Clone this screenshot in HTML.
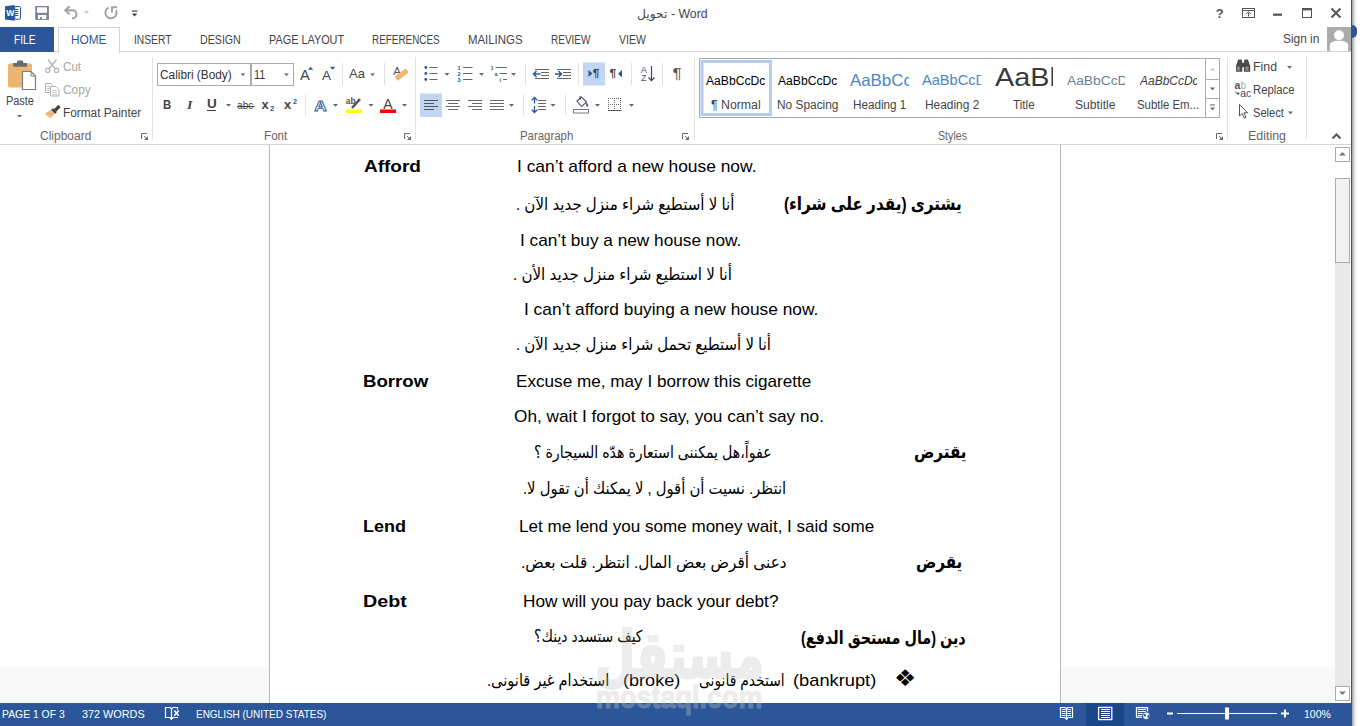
<!DOCTYPE html>
<html lang="en"><head><meta charset="utf-8"><title>تحويل - Word</title>
<style>
html,body{margin:0;padding:0;width:1360px;height:726px;overflow:hidden;background:#fff}
body{position:relative;font-family:"Liberation Sans","DejaVu Sans",sans-serif}
.t{position:absolute;white-space:pre;transform-origin:0 0;display:block;margin:0;padding:0}
.abs{position:absolute}
#win{position:absolute;left:0;top:0;width:1351px;height:726px;background:#fff;overflow:hidden}
svg{position:absolute;left:0;top:0;overflow:visible}
</style></head><body>
<div id="win">
  <!-- tabs -->
  <div class="abs" style="left:0;top:27px;width:54px;height:25px;background:#2b579a"></div>
  <div class="abs" style="left:54px;top:51px;width:1297px;height:1px;background:#d4d4d4"></div>
  <div class="abs" style="left:58px;top:27px;width:60px;height:25px;background:#fff;border:1px solid #d4d4d4;border-bottom:none"></div>
  <!-- ribbon bottom -->
  <div class="abs" style="left:0;top:144px;width:1351px;height:1px;background:#d4d4d4"></div>
  <!-- document area -->
  <div class="abs" style="left:0;top:145px;width:1351px;height:558px;background:#fdfdfd"></div>
  <div class="abs" style="left:269px;top:145px;width:790px;height:558px;background:#fff;border-left:1px solid #b9b9b9;border-right:1px solid #b9b9b9"></div>
  <div class="abs" style="left:0;top:667px;width:269px;height:36px;background:#f8f8f8"></div>
  <div class="abs" style="left:1061px;top:667px;width:274px;height:36px;background:#f8f8f8"></div>
  <!-- scrollbar -->
  <div class="abs" style="left:1335px;top:145px;width:16px;height:558px;background:#fff"></div>
  <div class="abs" style="left:1335px;top:263px;width:15px;height:423px;background:#e9e9e9"></div>
  <div class="abs" style="left:1335px;top:147px;width:13px;height:13px;background:#fff;border:1px solid #ababab"></div>
  <div class="abs" style="left:1335px;top:178px;width:13px;height:83px;background:#f1f1f1;border:1px solid #ababab"></div>
  <div class="abs" style="left:1335px;top:686px;width:13px;height:13px;background:#fff;border:1px solid #ababab"></div>
  <!-- status bar -->
  <div class="abs" style="left:0;top:703px;width:1351px;height:23px;background:#2b579a"></div>
  <svg width="1351" height="726" viewBox="0 0 1351 726">
  <path d="M1339,155.500l3.500,-3.500l3.500,3.500z" fill="#777"/>
  <path d="M1339,691.500l3.500,3.500l3.500,-3.500z" fill="#777"/>
<path d="M5,6.300L14.800,5V20.700L5,19.500z" fill="#2b579a"/>
<rect x="14.800" y="6.500" width="5.700" height="12.700" rx="1" fill="#fff" stroke="#2b579a" stroke-width="1"/>
<rect x="14.8" y="9" width="3.5" height="1" fill="#2b579a"/>
<rect x="14.8" y="11" width="3.5" height="1" fill="#2b579a"/>
<rect x="14.8" y="13" width="3.5" height="1" fill="#2b579a"/>
<rect x="14.8" y="15" width="3.5" height="1" fill="#2b579a"/>
<text x="6.200" y="16.300" font-family="Liberation Sans,sans-serif" font-weight="bold" font-size="8.500" fill="#fff">W</text>
<rect x="35.200" y="6" width="13.700" height="13.900" fill="#79829a"/>
<rect x="37" y="7.300" width="10" height="5.500" fill="#fff"/>
<rect x="38" y="15" width="8.300" height="4" fill="#fff"/>
<rect x="40" y="17" width="1.900" height="2" fill="#79829a"/>
<path d="M69.6,6.2L65.3,10.3L69.6,14.2M65.5,10.3h7a4,4 0 0 1 0,8h-.5" fill="none" stroke="#a3a3a3" stroke-width="2"/>
<path d="M84.2,11h4.8l-2.4,2.8z" fill="#c4c4c4"/>
<path d="M108.6,7.6A5.6,5.6 0 1 0 116,10.2" fill="none" stroke="#a3a3a3" stroke-width="2"/>
<path d="M112,12.3V7.3H117" fill="none" stroke="#a3a3a3" stroke-width="2"/>
<rect x="132" y="10.5" width="5.5" height="1.2" fill="#444"/>
<path d="M131.8,13.6h5.6l-2.8,3z" fill="#444"/>
<text x="1215.800" y="17.600" font-family="Liberation Sans,sans-serif" font-weight="bold" font-size="13" fill="#555">?</text>
<rect x="1242.5" y="8.5" width="12" height="9" fill="none" stroke="#555" stroke-width="1"/>
<rect x="1242" y="10" width="13" height="1" fill="#555"/>
<path d="M1248.5,16.5v-4M1246,14.2l2.5,-2.5l2.5,2.5" fill="none" stroke="#555" stroke-width="1"/>
<rect x="1273" y="13.6" width="9" height="2.2" fill="#555"/>
<rect x="1302.5" y="8.5" width="9" height="9" fill="none" stroke="#555" stroke-width="1"/>
<rect x="1302" y="8" width="10" height="2.4" fill="#555"/>
<path d="M1331.5,8.5l9,9M1340.5,8.5l-9,9" fill="none" stroke="#555" stroke-width="2"/>
<rect x="1327" y="27" width="24" height="24" fill="#ababab"/>
<circle cx="1339" cy="35.300" r="5" fill="#fff"/>
<path d="M1329.800,51v-5.500c0,-3.200 3.400,-4.800 9.200,-4.800s9.200,1.600 9.200,4.800v5.500z" fill="#fff"/>
<rect x="8" y="63.400" width="24" height="24.200" rx="1.500" fill="#ebb672"/>
<rect x="13.200" y="63" width="13.800" height="3.700" fill="#6a6a6a"/>
<rect x="17.100" y="60.400" width="6.100" height="3.200" rx="1" fill="#6a6a6a"/>
<path d="M22.500,71.500h8.500l4.500,4.500v13.500h-13z" fill="#fff" stroke="#7d7d7d" stroke-width="1.200"/>
<path d="M31,71.500v4.500h4.500" fill="none" stroke="#7d7d7d" stroke-width="1"/>
<path d="M17,115h5l-2.5,2.6z" fill="#666"/>
<path d="M48,59.5l7.5,9.500M56.500,59.500l-7.500,9.500" fill="none" stroke="#b3b3b3" stroke-width="1.3"/>
<circle cx="47.800" cy="70.300" r="2.200" fill="none" stroke="#b3b3b3" stroke-width="1.2"/>
<circle cx="56.500" cy="70.300" r="2.200" fill="none" stroke="#b3b3b3" stroke-width="1.2"/>
<path d="M45.500,83.500h5l2,2v7h-7z" fill="#fff" stroke="#b3b3b3" stroke-width="1"/>
<path d="M50.500,86.500h5.500l3,3v6.500h-8.500z" fill="#fff" stroke="#b3b3b3" stroke-width="1"/>
<rect x="52" y="90" width="5" height="1" fill="#c4c4c4"/>
<rect x="52" y="92" width="5" height="1" fill="#c4c4c4"/>
<rect x="52" y="94" width="5" height="1" fill="#c4c4c4"/>
<rect x="47" y="86" width="3" height="1" fill="#c4c4c4"/>
<rect x="47" y="88" width="3" height="1" fill="#c4c4c4"/>
<rect x="47" y="90" width="3" height="1" fill="#c4c4c4"/>
<path d="M55,110.500l4.500,-4.500" stroke="#444" stroke-width="3.2" fill="none"/>
<path d="M52,109l4,4" stroke="#444" stroke-width="2.500" fill="none"/>
<path d="M50.500,109.800l-5.500,4.200l5.500,4.200l4.500,-4.800z" fill="#ecb777"/>
<path d="M141.5,139V133.5H147" fill="none" stroke="#6a6a6a" stroke-width="1"/><path d="M144,140H148V136z" fill="#6a6a6a"/><path d="M144,136L146.5,138.5" fill="none" stroke="#6a6a6a" stroke-width="1"/>
<rect x="152" y="57" width="1" height="83" fill="#e1e1e1"/>
<rect x="157.500" y="63.500" width="93" height="22" fill="#fff" stroke="#ababab" stroke-width="1"/>
<rect x="251.500" y="63.500" width="42" height="22" fill="#fff" stroke="#ababab" stroke-width="1"/>
<path d="M240.5,73.5h5l-2.5,2.6z" fill="#666"/>
<path d="M284,73.5h5l-2.5,2.6z" fill="#666"/>
<path d="M308,69.700l2.600,-2.900l2.600,2.900z" fill="#2b579a"/>
<path d="M330,66.800l2.600,2.900l2.600,-2.900z" fill="#2b579a"/>
<rect x="342" y="63" width="1" height="22" fill="#e1e1e1"/>
<path d="M370,73.5h5l-2.5,2.6z" fill="#666"/>
<rect x="384" y="63" width="1" height="22" fill="#e1e1e1"/>
<text x="393.300" y="75" font-family="Liberation Sans,sans-serif" font-size="11.500" fill="#555">A</text>
<rect x="-7" y="-2.600" width="14" height="5.200" rx="1.200" transform="translate(401.600,74.600) rotate(-38)" fill="#ecb777"/>
<rect x="207" y="110" width="9" height="1" fill="#444"/>
<path d="M226,104h5l-2.5,2.8z" fill="#666"/>
<rect x="237.5" y="106" width="17.0" height="1" fill="#444"/>
<rect x="305" y="94.5" width="1" height="21.0" fill="#e1e1e1"/>
<text x="0" y="0" transform="translate(314.300,110.500) scale(1.120,1)" font-family="Liberation Sans,sans-serif" font-size="15.500" font-weight="bold" fill="#fff" stroke="#2b579a" stroke-width=".9">A</text>
<path d="M333,104h5l-2.5,2.8z" fill="#666"/>
<text x="345.800" y="104" font-family="Liberation Sans,sans-serif" font-size="8.500" font-weight="bold" fill="#555">ab</text>
<path d="M352,108l8,-9" stroke="#555" stroke-width="2.600" fill="none"/>
<rect x="346" y="109.500" width="16" height="3.500" fill="#ffff00"/>
<path d="M368.5,104h5l-2.5,2.8z" fill="#666"/>
<text x="383.300" y="109" font-family="Liberation Sans,sans-serif" font-size="14" fill="#444">A</text>
<rect x="380" y="109.500" width="16" height="3.500" fill="#ff0000"/>
<path d="M402,104h5l-2.5,2.8z" fill="#666"/>
<path d="M404.5,139V133.5H410" fill="none" stroke="#6a6a6a" stroke-width="1"/><path d="M407,140H411V136z" fill="#6a6a6a"/><path d="M407,136L409.5,138.5" fill="none" stroke="#6a6a6a" stroke-width="1"/>
<rect x="415" y="57" width="1" height="83" fill="#e1e1e1"/>
<circle cx="425.800" cy="67.5" r="1.400" fill="#2b579a"/>
<rect x="429.5" y="67.0" width="8.0" height="1" fill="#666"/>
<circle cx="425.800" cy="73.5" r="1.400" fill="#2b579a"/>
<rect x="429.5" y="73.0" width="8.0" height="1" fill="#666"/>
<circle cx="425.800" cy="79.5" r="1.400" fill="#2b579a"/>
<rect x="429.5" y="79.0" width="8.0" height="1" fill="#666"/>
<path d="M444.5,73h5l-2.5,2.8z" fill="#666"/>
<text x="457.600" y="69.5" font-family="Liberation Sans,sans-serif" font-size="5.500" font-weight="bold" fill="#2b579a">1</text>
<rect x="463" y="67.0" width="9.5" height="1" fill="#666"/>
<text x="457.600" y="75.5" font-family="Liberation Sans,sans-serif" font-size="5.500" font-weight="bold" fill="#2b579a">2</text>
<rect x="463" y="73.0" width="9.5" height="1" fill="#666"/>
<text x="457.600" y="81.5" font-family="Liberation Sans,sans-serif" font-size="5.500" font-weight="bold" fill="#2b579a">3</text>
<rect x="463" y="79.0" width="9.5" height="1" fill="#666"/>
<path d="M479,73h5l-2.5,2.8z" fill="#666"/>
<text x="490.500" y="69.500" font-family="Liberation Sans,sans-serif" font-size="5.500" font-weight="bold" fill="#2b579a">1</text>
<text x="494.500" y="75.500" font-family="Liberation Sans,sans-serif" font-size="5.500" font-weight="bold" fill="#2b579a">a</text>
<text x="499.500" y="81.500" font-family="Liberation Sans,sans-serif" font-size="5.500" font-weight="bold" fill="#2b579a">i</text>
<rect x="495.5" y="67" width="11.5" height="1" fill="#666"/>
<rect x="499.5" y="73" width="7.5" height="1" fill="#666"/>
<rect x="503" y="79" width="4" height="1" fill="#666"/>
<path d="M511,73h5l-2.5,2.8z" fill="#666"/>
<rect x="525" y="63" width="1" height="22" fill="#e1e1e1"/>
<rect x="535" y="69" width="14" height="1" fill="#666"/>
<rect x="541" y="72" width="8" height="1" fill="#666"/>
<rect x="541" y="75" width="8" height="1" fill="#666"/>
<rect x="535" y="78" width="14" height="1" fill="#666"/>
<rect x="557" y="69" width="14" height="1" fill="#666"/>
<rect x="563" y="72" width="8" height="1" fill="#666"/>
<rect x="563" y="75" width="8" height="1" fill="#666"/>
<rect x="557" y="78" width="14" height="1" fill="#666"/>
<path d="M533.500,74h7M536.500,71l-3,3l3,3" fill="none" stroke="#2b579a" stroke-width="1.500"/>
<path d="M555,74h6.500M558.500,71l3,3l-3,3" fill="none" stroke="#2b579a" stroke-width="1.500"/>
<rect x="578" y="63" width="1" height="22" fill="#e1e1e1"/>
<rect x="583" y="62.500" width="22" height="23" fill="#c2d5f2"/>
<path d="M588.500,70l4,3.500l-4,3.500z" fill="#2b579a"/>
<text x="0" y="0" transform="translate(592.800,76.500) scale(1.200,1)" font-family="Liberation Sans,sans-serif" font-size="10" font-weight="bold" fill="#444">¶</text>
<text x="0" y="0" transform="translate(609.600,76.500) scale(1.200,1)" font-family="Liberation Sans,sans-serif" font-size="10" font-weight="bold" fill="#444">¶</text>
<path d="M622,70l-4,3.700l4,3.700z" fill="#2b579a"/>
<rect x="631" y="63" width="1" height="22" fill="#e1e1e1"/>
<text x="640.800" y="72.800" font-family="Liberation Sans,sans-serif" font-size="9" fill="#2b579a">A</text>
<text x="641" y="81" font-family="Liberation Sans,sans-serif" font-size="9" fill="#555">Z</text>
<path d="M651.500,66v14.500M648.500,77.500l3,3.200l3,-3.200" fill="none" stroke="#444" stroke-width="1.200"/>
<rect x="662" y="63" width="1" height="22" fill="#e1e1e1"/>
<text x="0" y="0" transform="translate(672.600,78.300) scale(1.180,1)" font-family="Liberation Sans,sans-serif" font-size="14.500" fill="#555">¶</text>
<rect x="420" y="93.500" width="22" height="23.500" fill="#c2d5f2"/>
<rect x="424" y="100" width="14" height="1" fill="#555"/>
<rect x="446" y="100" width="14" height="1" fill="#666"/>
<rect x="468" y="100" width="14" height="1" fill="#666"/>
<rect x="490" y="100" width="14" height="1" fill="#666"/>
<rect x="424" y="103" width="10" height="1" fill="#555"/>
<rect x="448" y="103" width="10" height="1" fill="#666"/>
<rect x="472" y="103" width="10" height="1" fill="#666"/>
<rect x="490" y="103" width="14" height="1" fill="#666"/>
<rect x="424" y="106" width="14" height="1" fill="#555"/>
<rect x="446" y="106" width="14" height="1" fill="#666"/>
<rect x="468" y="106" width="14" height="1" fill="#666"/>
<rect x="490" y="106" width="14" height="1" fill="#666"/>
<rect x="424" y="109" width="10" height="1" fill="#555"/>
<rect x="448" y="109" width="10" height="1" fill="#666"/>
<rect x="472" y="109" width="10" height="1" fill="#666"/>
<rect x="490" y="109" width="14" height="1" fill="#666"/>
<path d="M509,104h5l-2.5,2.8z" fill="#666"/>
<rect x="523" y="94.5" width="1" height="21.0" fill="#e1e1e1"/>
<path d="M534.500,97.500v6M534.500,106v6.500M531.700,100.300l2.800,-2.800l2.800,2.800M531.700,109.700l2.800,2.800l2.800,-2.800" fill="none" stroke="#2b579a" stroke-width="1.300"/>
<rect x="538" y="100" width="8" height="1" fill="#666"/>
<rect x="538" y="103" width="8" height="1" fill="#666"/>
<rect x="538" y="106" width="8" height="1" fill="#666"/>
<rect x="538" y="109" width="8" height="1" fill="#666"/>
<path d="M550.5,104h5l-2.5,2.8z" fill="#666"/>
<rect x="565" y="94.5" width="1" height="21.0" fill="#e1e1e1"/>
<path d="M577,101l4.500,-4l5,5l-4.800,4.500z" fill="#fff" stroke="#555" stroke-width="1.100"/>
<path d="M586.500,102.500c1.500,1.500 2.200,3 1.200,4c-1.200,.8 -2,-.8 -1.200,-4z" fill="#2b579a"/>
<path d="M580,96v4" stroke="#555" stroke-width="1.100"/>
<rect x="573.500" y="109.500" width="15" height="3.500" fill="#fff" stroke="#777" stroke-width="1"/>
<path d="M595,104h5l-2.5,2.8z" fill="#666"/>
<path d="M608,98.500h13M608,104.500h13M608.500,98v12M614.500,98v12M620.500,98v12" fill="none" stroke="#666" stroke-width="1" stroke-dasharray="1,1" shape-rendering="crispEdges"/>
<rect x="608" y="110" width="13.5" height="1" fill="#555"/>
<path d="M629,104h5l-2.5,2.8z" fill="#666"/>
<path d="M682.5,139V133.5H688" fill="none" stroke="#6a6a6a" stroke-width="1"/><path d="M685,140H689V136z" fill="#6a6a6a"/><path d="M685,136L687.5,138.5" fill="none" stroke="#6a6a6a" stroke-width="1"/>
<rect x="694" y="57" width="1" height="83" fill="#e1e1e1"/>
<rect x="699.500" y="58.500" width="520" height="59" fill="#fff" stroke="#ababab" stroke-width="1"/>
<rect x="702" y="61.500" width="68.500" height="53" fill="#fff" stroke="#b4ccee" stroke-width="3"/>
<path d="M1205.500,58.500v59M1205.500,79.500h14M1205.500,98.500h14" fill="none" stroke="#ababab" stroke-width="1"/>
<path d="M1210,70.500l2.500,-2.800l2.500,2.800z" fill="#c6c6c6"/>
<path d="M1210,87.5h5l-2.5,2.8z" fill="#666"/>
<rect x="1210" y="104.5" width="5" height="1" fill="#666"/>
<path d="M1210,107.5h5l-2.5,2.8z" fill="#666"/>
<path d="M1216.5,139V133.5H1222" fill="none" stroke="#6a6a6a" stroke-width="1"/><path d="M1219,140H1223V136z" fill="#6a6a6a"/><path d="M1219,136L1221.5,138.5" fill="none" stroke="#6a6a6a" stroke-width="1"/>
<rect x="1227" y="57" width="1" height="83" fill="#e1e1e1"/>
<path d="M1238.300,59.500h3.400l.8,3.500h1.200l.8,-3.500h3.400l2.300,6.500v5.800h-6.300v-4.600h-1.600v4.600h-6.300v-5.800z" fill="#4a4a4a"/>
<rect x="1236.700" y="66.500" width="3.200" height="4.200" fill="#8a8a8a"/><rect x="1245.300" y="66.500" width="3.200" height="4.200" fill="#8a8a8a"/>
<path d="M1287,66h5l-2.5,2.8z" fill="#666"/>
<text x="1234.600" y="89.300" font-family="Liberation Sans,sans-serif" font-size="10.500" font-weight="bold" fill="#555">a<tspan fill="#a9a9a9" font-weight="normal">b</tspan></text>
<text x="1240.200" y="96.600" font-family="Liberation Sans,sans-serif" font-size="10.500" fill="#444">a<tspan fill="#2b579a">c</tspan></text>
<path d="M1235.300,91.500l1.500,2h2.200M1237.600,92l1.500,1.500l-1.500,1.500" fill="none" stroke="#2b579a" stroke-width="1"/>
<path d="M1239.500,104.500v11.500l2.600,-2.500l2.200,4.600l1.800,-.8l-2.200,-4.500h3.800z" fill="#fff" stroke="#555" stroke-width="1"/>
<path d="M1288,111.5h5l-2.5,2.8z" fill="#666"/>
<rect x="1306" y="57" width="1" height="83" fill="#e1e1e1"/>
<path d="M1332.500,138.500l4,-4l4,4" fill="none" stroke="#555" stroke-width="2"/>
<path d="M171.500,708.700L170,707.500H165.500V717.500H170L171.500,719.300L173,717.500H178M171.500,708.700L173,707.500H177.500V709.500M171.500,708.700V719" fill="none" stroke="#fff" stroke-width="1.200"/>
<path d="M174.300,710.600l4.400,5.200M178.700,710.600l-4.400,5.200" stroke="#fff" stroke-width="1.600" fill="none"/>
<path d="M1066.500,708.500L1065,707.500H1060.500V717.500H1065L1066.500,719.300L1068,717.500H1072.500V707.500H1068z" fill="none" stroke="#fff" stroke-width="1.200"/>
<path d="M1066.500,708.500V719.500" stroke="#fff" stroke-width="1.200"/>
<rect x="1062" y="709" width="3.5" height="1" fill="#fff"/>
<rect x="1067.5" y="709" width="3.5" height="1" fill="#fff"/>
<rect x="1062" y="711" width="3.5" height="1" fill="#fff"/>
<rect x="1067.5" y="711" width="3.5" height="1" fill="#fff"/>
<rect x="1062" y="713" width="3.5" height="1" fill="#fff"/>
<rect x="1067.5" y="713" width="3.5" height="1" fill="#fff"/>
<rect x="1062" y="715" width="3.5" height="1" fill="#fff"/>
<rect x="1067.5" y="715" width="3.5" height="1" fill="#fff"/>
<rect x="1086" y="703" width="38" height="23" fill="#19478a"/>
<rect x="1098.600" y="707.400" width="13.200" height="12.200" fill="none" stroke="#fff" stroke-width="1.300"/>
<rect x="1101" y="709" width="9" height="1" fill="#fff"/>
<rect x="1101" y="711" width="9" height="1" fill="#fff"/>
<rect x="1101" y="713" width="9" height="1" fill="#fff"/>
<rect x="1101" y="715" width="9" height="1" fill="#fff"/>
<rect x="1101" y="717" width="9" height="1" fill="#fff"/>
<path d="M1136.500,717.200V707.600H1147.500V711.500" fill="none" stroke="#fff" stroke-width="1.300"/>
<rect x="1136" y="716.6" width="6" height="1.2" fill="#fff"/>
<rect x="1138" y="709" width="8" height="1" fill="#fff"/>
<rect x="1138" y="711" width="8" height="1" fill="#fff"/>
<rect x="1138" y="713" width="5" height="1" fill="#fff"/>
<rect x="1138" y="715" width="4" height="1" fill="#fff"/>
<circle cx="1146.300" cy="715.800" r="3.700" fill="#fff" stroke="#2b579a" stroke-width=".8"/>
<path d="M1144,713.500l2,1.200l-.5,2l-1.800,-.6zM1147.200,716.200l1.800,-1.600l.6,1.800l-1.600,1.800z" fill="#2b579a"/>
<rect x="1167" y="712.5" width="6" height="2" fill="#fff"/>
<rect x="1177" y="713" width="100" height="1" fill="#fff"/>
<rect x="1225" y="707.500" width="4" height="12" fill="#fff"/>
<rect x="1281" y="712.5" width="8" height="2" fill="#fff"/>
<rect x="1284" y="709.500" width="2" height="8" fill="#fff"/>
  </svg>
<span class="t" style="left:637.0px;top:6.01px;font-size:12px;line-height:16px;color:#444;transform:scaleX(1.0256);">تحويل - Word</span>
<span class="t" style="left:13.7px;top:32.01px;font-size:12px;line-height:16px;color:#fff;transform:scaleX(0.8485);">FILE</span>
<span class="t" style="left:70.9px;top:32.01px;font-size:12px;line-height:16px;color:#2b579a;transform:scaleX(0.9862);">HOME</span>
<span class="t" style="left:133.8px;top:32.01px;font-size:12px;line-height:16px;color:#444;transform:scaleX(0.8560);">INSERT</span>
<span class="t" style="left:199.7px;top:32.01px;font-size:12px;line-height:16px;color:#444;transform:scaleX(0.8866);">DESIGN</span>
<span class="t" style="left:268.7px;top:32.01px;font-size:12px;line-height:16px;color:#444;transform:scaleX(0.9057);">PAGE LAYOUT</span>
<span class="t" style="left:371.7px;top:32.01px;font-size:12px;line-height:16px;color:#444;transform:scaleX(0.8255);">REFERENCES</span>
<span class="t" style="left:467.9px;top:32.01px;font-size:12px;line-height:16px;color:#444;transform:scaleX(0.9504);">MAILINGS</span>
<span class="t" style="left:550.9px;top:32.01px;font-size:12px;line-height:16px;color:#444;transform:scaleX(0.8331);">REVIEW</span>
<span class="t" style="left:619.4px;top:32.01px;font-size:12px;line-height:16px;color:#444;transform:scaleX(0.8774);">VIEW</span>
<span class="t" style="left:1283.4px;top:31.01px;font-size:12.5px;line-height:16px;color:#444;transform:scaleX(0.9512);">Sign in</span>
<span class="t" style="left:6.2px;top:93.01px;font-size:12px;line-height:16px;color:#444;transform:scaleX(0.9093);">Paste</span>
<span class="t" style="left:63.2px;top:59.01px;font-size:12px;line-height:16px;color:#a6a6a6;transform:scaleX(0.9669);">Cut</span>
<span class="t" style="left:63.2px;top:82.01px;font-size:12px;line-height:16px;color:#a6a6a6;transform:scaleX(0.9888);">Copy</span>
<span class="t" style="left:63.2px;top:105.01px;font-size:12px;line-height:16px;color:#444;transform:scaleX(0.9853);">Format Painter</span>
<span class="t" style="left:40.2px;top:128.01px;font-size:12px;line-height:16px;color:#666;transform:scaleX(1.0002);">Clipboard</span>
<span class="t" style="left:160.2px;top:67.01px;font-size:12px;line-height:16px;color:#333;transform:scaleX(0.9864);">Calibri (Body)</span>
<span class="t" style="left:254.4px;top:67.01px;font-size:12px;line-height:16px;color:#333;transform:scaleX(0.8996);">11</span>
<span class="t" style="left:264.4px;top:128.01px;font-size:12px;line-height:16px;color:#666;transform:scaleX(0.9725);">Font</span>
<span class="t" style="left:520.1px;top:128.01px;font-size:12px;line-height:16px;color:#666;transform:scaleX(0.9501);">Paragraph</span>
<span class="t" style="left:937.9px;top:128.01px;font-size:12px;line-height:16px;color:#666;transform:scaleX(0.8875);">Styles</span>
<span class="t" style="left:1247.9px;top:128.01px;font-size:12px;line-height:16px;color:#666;transform:scaleX(1.0356);">Editing</span>
<span class="t" style="left:1253.3px;top:59.01px;font-size:12px;line-height:16px;color:#444;transform:scaleX(1.0278);">Find</span>
<span class="t" style="left:1253.3px;top:82.01px;font-size:12px;line-height:16px;color:#444;transform:scaleX(0.9447);">Replace</span>
<span class="t" style="left:1253.3px;top:105.01px;font-size:12px;line-height:16px;color:#444;transform:scaleX(0.9260);">Select</span>
<span class="t" style="left:163.2px;top:97.01px;font-size:12.5px;line-height:16px;color:#444;transform:scaleX(0.9111);font-weight:bold">B</span>
<span class="t" style="left:187.0px;top:96.00px;font-size:13px;line-height:17px;color:#444;transform:scaleX(1.0714);font-style:italic;font-family:'Liberation Serif',serif;font-weight:bold">I</span>
<span class="t" style="left:206.9px;top:96.01px;font-size:12px;line-height:16px;color:#444;transform:scaleX(1.1250);font-weight:bold">U</span>
<span class="t" style="left:237.4px;top:98.00px;font-size:11px;line-height:14px;color:#444;transform:scaleX(0.9213);">abc</span>
<span class="t" style="left:261.4px;top:96.00px;font-size:13px;line-height:17px;color:#444;transform:scaleX(1.0000);font-weight:bold">x</span>
<span class="t" style="left:270.3px;top:104.01px;font-size:7px;line-height:9px;color:#2b579a;transform:scaleX(1.0750);font-weight:bold">2</span>
<span class="t" style="left:283.9px;top:96.00px;font-size:13px;line-height:17px;color:#444;transform:scaleX(1.0000);font-weight:bold">x</span>
<span class="t" style="left:292.5px;top:97.01px;font-size:7px;line-height:9px;color:#2b579a;transform:scaleX(1.0250);font-weight:bold">2</span>
<span class="t" style="left:349.4px;top:65.00px;font-size:13px;line-height:17px;color:#444;transform:scaleX(1.0017);">Aa</span>
<span class="t" style="left:300.4px;top:66.01px;font-size:14px;line-height:18px;color:#444;transform:scaleX(1.0500);">A</span>
<span class="t" style="left:322.4px;top:68.01px;font-size:12px;line-height:16px;color:#444;transform:scaleX(1.1250);">A</span>
<div class="abs" style="left:706.3px;top:73.01px;width:58.7px;height:22px;overflow:hidden"><span class="t" style="left:0;top:0;font-size:12px;line-height:16px;color:#000;transform:scaleX(1.0109);">AaBbCcDc</span></div>
<span class="t" style="left:710.9px;top:97.01px;font-size:12px;line-height:16px;color:#444;transform:scaleX(1.0254);">¶ Normal</span>
<div class="abs" style="left:778.3px;top:73.01px;width:58.7px;height:22px;overflow:hidden"><span class="t" style="left:0;top:0;font-size:12px;line-height:16px;color:#000;transform:scaleX(1.0109);">AaBbCcDc</span></div>
<span class="t" style="left:777.1px;top:97.01px;font-size:12px;line-height:16px;color:#444;transform:scaleX(0.9908);">No Spacing</span>
<div class="abs" style="left:850.2px;top:70.02px;width:58.8px;height:27px;overflow:hidden"><span class="t" style="left:0;top:0;font-size:16.5px;line-height:21px;color:#4a86c5;transform:scaleX(1.0217);">AaBbCc</span></div>
<span class="t" style="left:852.6px;top:97.01px;font-size:12px;line-height:16px;color:#444;transform:scaleX(0.9739);">Heading 1</span>
<div class="abs" style="left:922.1px;top:71.01px;width:58.9px;height:25px;overflow:hidden"><span class="t" style="left:0;top:0;font-size:14.5px;line-height:19px;color:#4a86c5;transform:scaleX(1.0049);">AaBbCcD</span></div>
<span class="t" style="left:924.7px;top:97.01px;font-size:12px;line-height:16px;color:#444;transform:scaleX(0.9921);">Heading 2</span>
<div class="abs" style="left:994.7px;top:60.01px;width:58.3px;height:40px;overflow:hidden"><span class="t" style="left:0;top:0;font-size:26px;line-height:34px;color:#3a3a3a;transform:scaleX(1.1087);">AaBb</span></div>
<span class="t" style="left:1013.4px;top:97.01px;font-size:12px;line-height:16px;color:#444;transform:scaleX(0.9756);">Title</span>
<div class="abs" style="left:1066.5px;top:73.01px;width:58.5px;height:22px;overflow:hidden"><span class="t" style="left:0;top:0;font-size:12px;line-height:16px;color:#6a7f9a;transform:scaleX(1.1494);">AaBbCcD</span></div>
<span class="t" style="left:1075.4px;top:97.01px;font-size:12px;line-height:16px;color:#444;transform:scaleX(1.0111);">Subtitle</span>
<div class="abs" style="left:1139.6px;top:73.01px;width:57.4px;height:22px;overflow:hidden"><span class="t" style="left:0;top:0;font-size:12px;line-height:16px;color:#404040;transform:scaleX(0.9978);font-style:italic">AaBbCcDc</span></div>
<span class="t" style="left:1136.6px;top:97.01px;font-size:12px;line-height:16px;color:#444;transform:scaleX(0.9504);">Subtle Em...</span>
<span class="t" style="left:1.9px;top:707.00px;font-size:11.5px;line-height:15px;color:#fff;transform:scaleX(0.9022);">PAGE 1 OF 3</span>
<span class="t" style="left:82.4px;top:707.00px;font-size:11.5px;line-height:15px;color:#fff;transform:scaleX(0.9432);">372 WORDS</span>
<span class="t" style="left:195.7px;top:707.00px;font-size:11.5px;line-height:15px;color:#fff;transform:scaleX(0.8669);">ENGLISH (UNITED STATES)</span>
<span class="t" style="left:1304.4px;top:707.00px;font-size:11.5px;line-height:15px;color:#fff;transform:scaleX(0.9114);">100%</span>
<span class="t" style="left:363.9px;top:156.00px;font-size:17px;line-height:22px;color:#000;transform:scaleX(1.1166);font-weight:bold">Afford</span>
<span class="t" style="left:363.3px;top:371.00px;font-size:17px;line-height:22px;color:#000;transform:scaleX(1.0965);font-weight:bold">Borrow</span>
<span class="t" style="left:363.3px;top:516.00px;font-size:17px;line-height:22px;color:#000;transform:scaleX(1.0580);font-weight:bold">Lend</span>
<span class="t" style="left:363.2px;top:591.00px;font-size:17px;line-height:22px;color:#000;transform:scaleX(1.1585);font-weight:bold">Debt</span>
<span class="t" style="left:517.2px;top:156.00px;font-size:17px;line-height:22px;color:#000;transform:scaleX(1.0231);">I can’t afford a new house now.</span>
<span class="t" style="left:520.4px;top:230.00px;font-size:17px;line-height:22px;color:#000;transform:scaleX(1.0134);">I can’t buy a new house now.</span>
<span class="t" style="left:523.9px;top:299.00px;font-size:17px;line-height:22px;color:#000;transform:scaleX(1.0186);">I can’t afford buying a new house now.</span>
<span class="t" style="left:516.4px;top:371.00px;font-size:17px;line-height:22px;color:#000;transform:scaleX(1.0081);">Excuse me, may I borrow this cigarette</span>
<span class="t" style="left:513.7px;top:406.00px;font-size:17px;line-height:22px;color:#000;transform:scaleX(1.0134);">Oh, wait I forgot to say, you can’t say no.</span>
<span class="t" style="left:518.9px;top:516.00px;font-size:17px;line-height:22px;color:#000;transform:scaleX(1.0026);">Let me lend you some money wait, I said some</span>
<span class="t" style="left:523.4px;top:591.00px;font-size:17px;line-height:22px;color:#000;transform:scaleX(1.0126);">How will you pay back your debt?</span>
<span class="t" style="left:623.3px;top:670.00px;font-size:17px;line-height:22px;color:#000;transform:scaleX(1.0635);">(broke)</span>
<span class="t" style="left:793.3px;top:670.00px;font-size:17px;line-height:22px;color:#000;transform:scaleX(1.0749);">(bankrupt)</span>
<span class="t" dir="rtl" style="left:515.5px;top:194.02px;font-size:16.5px;line-height:21px;color:#000;transform:scaleX(0.9126);">أنا لا أستطيع شراء منزل جديد الآن .</span>
<span class="t" dir="rtl" style="left:513.0px;top:264.02px;font-size:16.5px;line-height:21px;color:#000;transform:scaleX(0.9147);">أنا لا استطيع شراء منزل جديد الأن .</span>
<span class="t" dir="rtl" style="left:515.5px;top:334.02px;font-size:16.5px;line-height:21px;color:#000;transform:scaleX(0.9065);">أنا لا أستطيع تحمل شراء منزل جديد الآن .</span>
<span class="t" dir="rtl" style="left:533.5px;top:442.02px;font-size:16.5px;line-height:21px;color:#000;transform:scaleX(0.8575);">عفواً،هل يمكننى استعارة هدّه السيجارة ؟</span>
<span class="t" dir="rtl" style="left:522.8px;top:478.02px;font-size:16.5px;line-height:21px;color:#000;transform:scaleX(0.8978);">انتظر. نسيت أن أقول , لا يمكنك أن تقول لا.</span>
<span class="t" dir="rtl" style="left:521.0px;top:552.02px;font-size:16.5px;line-height:21px;color:#000;transform:scaleX(0.9261);">دعنى أقرض بعض المال. انتظر. قلت بعض.</span>
<span class="t" dir="rtl" style="left:533.6px;top:626.02px;font-size:16.5px;line-height:21px;color:#000;transform:scaleX(0.8465);">كيف ستسدد دينك؟</span>
<span class="t" dir="rtl" style="left:487.3px;top:670.02px;font-size:16.5px;line-height:21px;color:#000;transform:scaleX(0.8848);">استخدام غير قانونى.</span>
<span class="t" dir="rtl" style="left:699.1px;top:670.02px;font-size:16.5px;line-height:21px;color:#000;transform:scaleX(0.8405);">استخدم قانونى</span>
<span class="t" dir="rtl" style="left:784.4px;top:193.01px;font-size:18px;line-height:23px;color:#000;transform:scaleX(0.8471);font-weight:bold">يشترى (يقدر على شراء)</span>
<span class="t" dir="rtl" style="left:914.1px;top:441.01px;font-size:18px;line-height:23px;color:#000;transform:scaleX(0.8400);font-weight:bold">يقترض</span>
<span class="t" dir="rtl" style="left:916.1px;top:551.01px;font-size:18px;line-height:23px;color:#000;transform:scaleX(0.8395);font-weight:bold">يقرض</span>
<span class="t" dir="rtl" style="left:801.4px;top:627.01px;font-size:18px;line-height:23px;color:#000;transform:scaleX(0.7990);font-weight:bold">دين (مال مستحق الدفع)</span>
<span class="t" style="left:894.3px;top:663.01px;font-size:23px;line-height:30px;color:#000;transform:scaleX(1.0833);font-family:'DejaVu Sans',sans-serif">❖</span>
<span class="t" dir="rtl" style="left:595.1px;top:612.01px;font-size:66px;line-height:86px;color:#bdbdbd;transform:scaleX(0.7002);font-weight:bold;z-index:5;opacity:.28;-webkit-text-stroke:2.5px #bdbdbd">مستقل</span>
<span class="t" style="left:596.2px;top:678.01px;font-size:31px;line-height:40px;color:#c8c8c8;transform:scaleX(0.8713);font-weight:bold;z-index:5;opacity:.34;-webkit-text-stroke:1px #c8c8c8">mostaql.com</span>
</div>
<div class="abs" style="left:1351px;top:0;width:1px;height:726px;background:#2b579a"></div>
<div class="abs" style="left:1352px;top:0;width:5px;height:726px;background:linear-gradient(to right,rgba(0,0,0,.38),rgba(0,0,0,.12) 50%,rgba(0,0,0,0))"></div>
<div class="abs" style="left:1352px;top:25px;width:5px;height:13px;background:#2b579a;border-radius:0 7px 7px 0"></div>
</body></html>
